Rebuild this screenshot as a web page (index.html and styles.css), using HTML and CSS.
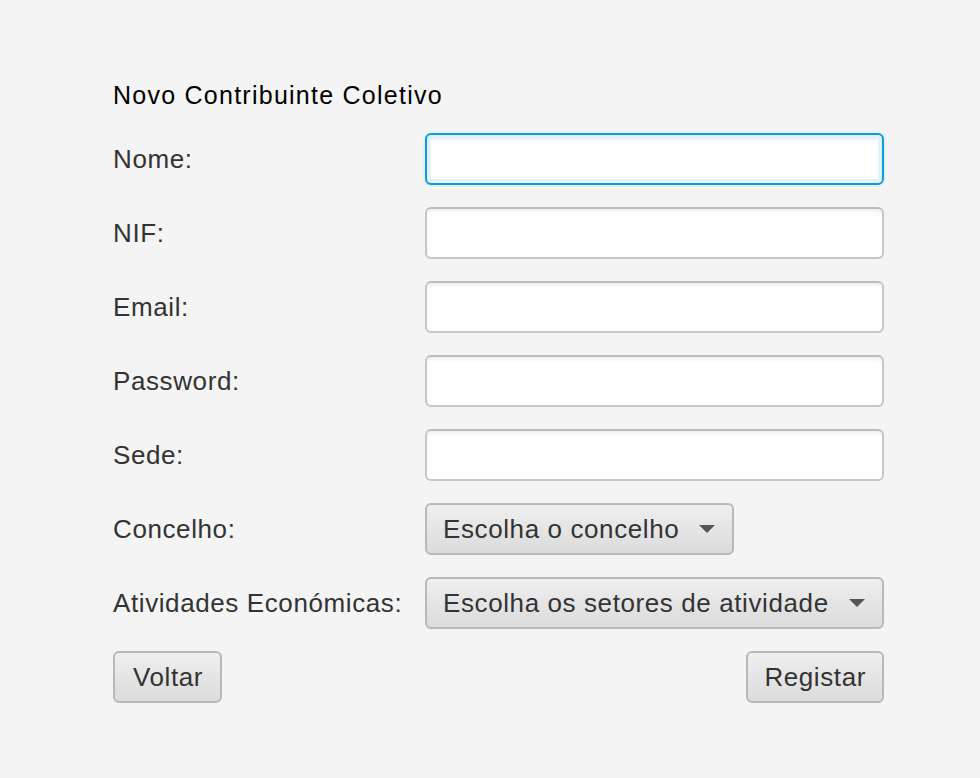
FILE: index.html
```html
<!DOCTYPE html>
<html>
<head>
<meta charset="utf-8">
<link rel="stylesheet" href="styles.css">
</head>
<body>
<div class="pane">
  <div class="title">Novo Contribuinte Coletivo</div>
  <div class="form">
    <label class="lbl">Nome:</label>
    <div class="field focused"><div class="inner"></div></div>
    <label class="lbl">NIF:</label>
    <div class="field"></div>
    <label class="lbl">Email:</label>
    <div class="field"></div>
    <label class="lbl">Password:</label>
    <div class="field"></div>
    <label class="lbl">Sede:</label>
    <div class="field"></div>
    <label class="lbl">Concelho:</label>
    <div class="cell"><div class="combo short"><span>Escolha o concelho</span><i class="arrow"></i></div></div>
    <label class="lbl">Atividades Económicas:</label>
    <div class="combo"><span>Escolha os setores de atividade</span><i class="arrow"></i></div>
  </div>
  <div class="buttons">
    <div class="btn back">Voltar</div>
    <div class="btn">Registar</div>
  </div>
</div>
</body>
</html>
```

FILE: styles.css
```css
html, body {
  margin: 0;
  padding: 0;
  background: #f4f4f4;
  font-family: "Liberation Sans", Arial, sans-serif;
}
.pane {
  width: 771px;
  padding: 79px 0 0 113px;
}
.title {
  font-size: 25px;
  letter-spacing: 1.25px;
  line-height: 32px;
  color: #000;
  height: 32px;
  margin-bottom: 22px;
}
.form {
  display: grid;
  grid-template-columns: 312px 459px;
  row-gap: 22px;
  align-items: center;
}
.lbl {
  font-size: 26px;
  letter-spacing: 0.6px;
  color: #333;
  line-height: 28px;
}
.field {
  box-sizing: border-box;
  height: 52px;
  border: 2px solid #c6c6c6;
  border-top-color: #bcbcbc;
  border-radius: 6px;
  background: #fff;
  box-shadow: inset 0 4px 4px -2px rgba(0,0,0,0.08);
}
.field.focused {
  border-color: #0a9dd6;
  background: #e3f2f9;
  padding: 4px;
  box-shadow: 0 0 0 2px #e6f1f6;
}
.field.focused .inner {
  height: 40px;
  background: #fff;
  box-shadow: inset 0 3px 3px -2px rgba(0,0,0,0.08);
}
.cell { display: flex; }
.combo {
  box-sizing: border-box;
  height: 52px;
  border: 2px solid #b8b8b8;
  border-radius: 6px;
  background: linear-gradient(#efefef, #dbdbdb);
  display: flex;
  align-items: center;
  justify-content: space-between;
  padding: 0 17px 0 16px;
  font-size: 26px;
  letter-spacing: 0.6px;
  color: #333;
}
.combo.short { width: 309px; }
.arrow {
  width: 0;
  height: 0;
  border-left: 8px solid transparent;
  border-right: 8px solid transparent;
  border-top: 8px solid #555;
}
.buttons {
  display: flex;
  justify-content: space-between;
  margin-top: 22px;
}
.btn {
  box-sizing: border-box;
  height: 52px;
  border: 2px solid #b8b8b8;
  border-radius: 6px;
  background: linear-gradient(#efefef, #dbdbdb);
  padding: 0 16px;
  font-size: 26px;
  letter-spacing: 0.6px;
  color: #333;
  display: flex;
  align-items: center;
}
.btn.back { padding: 0 17px 0 18px; }
```
